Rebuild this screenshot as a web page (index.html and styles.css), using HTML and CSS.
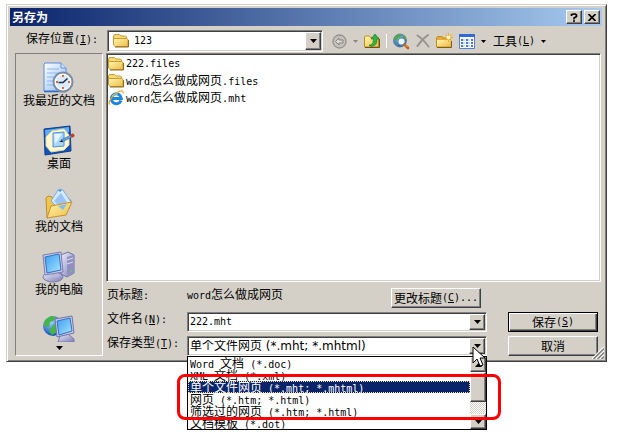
FILE: index.html
```html
<!DOCTYPE html>
<html lang="zh-CN">
<head>
    <meta charset="UTF-8">
    <meta name="viewport" content="width=device-width, initial-scale=1.0">
    <title>另存为</title>
    <link rel="stylesheet" href="styles.css">
</head>
<body>
<!-- shared gradients and symbols -->
<svg class="defs" width="0" height="0" aria-hidden="true">
    <defs>
        <linearGradient id="gold" x1="0" y1="0" x2="1" y2="1">
            <stop offset="0" stop-color="#fff6b0"/>
            <stop offset="1" stop-color="#eebc45"/>
        </linearGradient>
        <linearGradient id="screen" x1="0" y1="0" x2="1" y2="1">
            <stop offset="0" stop-color="#3d9cf0"/>
            <stop offset="1" stop-color="#a5e6ff"/>
        </linearGradient>
        <linearGradient id="paper" x1="0" y1="0" x2="1" y2="1">
            <stop offset="0" stop-color="#ffffff"/>
            <stop offset="1" stop-color="#8fbcf5"/>
        </linearGradient>
        <linearGradient id="metal" x1="0" y1="0" x2="1" y2="1">
            <stop offset="0" stop-color="#eeeefb"/>
            <stop offset="1" stop-color="#7c7cb4"/>
        </linearGradient>
        <radialGradient id="ocean" cx="0.4" cy="0.3" r="0.7">
            <stop offset="0" stop-color="#9fd0ff"/>
            <stop offset="1" stop-color="#1451b8"/>
        </radialGradient>
        <symbol id="folder" viewBox="0 0 16 16">
            <path d="M.5 12V3l1-1.500h5L8 3h4.500l1 1v2" fill="#f7da78" stroke="#c99a32"/>
            <path d="M2.500 13.500L.5 12V5.500h13l1.500 1v7z" fill="url(#gold)" stroke="#c99a32"/>
            <path d="M2 14h13.500V7" fill="none" stroke="#8c6a20"/>
        </symbol>
        <symbol id="caret" viewBox="0 0 7 4">
            <path d="M0 0h7L3.500 4z" fill="currentColor"/>
        </symbol>
        <symbol id="caret-small" viewBox="0 0 5 3">
            <path d="M0 0h5L2.500 3z" fill="currentColor"/>
        </symbol>
    </defs>
</svg>

<div class="dialog">
    <div class="title-bar">
        <h1>另存为</h1>
        <button type="button" class="title-button" aria-label="帮助">
            <svg width="8" height="9" viewBox="0 0 8 9"><path d="M1.500 3V1.500h1L3 1h2l1.500 1v1.500L4 5v1.500M3 8h2" fill="none" stroke="#000" stroke-width="1.600"/></svg>
        </button>
        <button type="button" class="title-button" aria-label="关闭">
            <svg width="8" height="7" viewBox="0 0 8 7"><path d="M.5 0l7 7M7.500 0l-7 7" stroke="#000" stroke-width="1.600"/></svg>
        </button>
    </div>

    <div class="location">
        <label for="folder-select">保存位置<span class="en">(<u>I</u>):</span></label>
        <div class="combo">
            <svg class="combo-icon" width="16" height="16"><use href="#folder"/></svg>
            <select id="folder-select"><option>123</option></select>
            <span class="combo-arrow"><svg width="7" height="4"><use href="#caret"/></svg></span>
        </div>
        <div class="toolbar">
            <button type="button" class="tool disabled" aria-label="后退">
                <svg width="15" height="15" viewBox="0 0 15 15"><circle cx="7.500" cy="7.500" r="6.500" fill="#c5c2bb" stroke="#96938e" stroke-width="1.300"/><path d="M3.500 7.500L7 4v2h4v3H7v2z" fill="#dedbd4" stroke="#85827d"/></svg>
            </button>
            <span class="caret disabled"><svg width="5" height="3"><use href="#caret-small"/></svg></span>
            <button type="button" class="tool" aria-label="向上一级">
                <svg width="16" height="16" viewBox="0 0 16 16"><path d="M.5 14V4l1-1h4l1 1.500h8V14z" fill="url(#gold)" stroke="#c08c22"/><path d="M1 14.500h14.500V6" fill="none" stroke="#6e5011"/><path d="M5 12h2q2.500-1 2.500-6H7L11 1l4 5h-2q.5 7-6 7.500z" fill="#2fb342" stroke="#127023" stroke-width=".6"/></svg>
            </button>
            <span class="separator"></span>
            <button type="button" class="tool" aria-label="搜索 Web">
                <svg width="17" height="17" viewBox="0 0 17 17"><circle cx="7" cy="7.500" r="6.500" fill="url(#ocean)" stroke="#4c7098" stroke-width=".7"/><path d="M2 3.500L5.500 1 9 2 7 4.500 5 5 4 8 1 7zM11 2l2 2v3l-3-2zM2 10l3 1v2z" fill="#51a84b"/><circle cx="8.500" cy="8.500" r="3.600" fill="#e6f6ff" stroke="#6686aa" stroke-width="1.200"/><path d="M11.500 11.500l3.500 3.500" stroke="#b55d13" stroke-width="2.600" stroke-linecap="round"/><path d="M12 11.500l2.500 2.500" stroke="#f5b95b"/></svg>
            </button>
            <button type="button" class="tool disabled" aria-label="删除">
                <svg width="14" height="14" viewBox="0 0 14 14"><path d="M1.500 1.500Q7 5 12.500 12.500M12 1Q6 5 1.500 12" fill="none" stroke="#98958f" stroke-width="2" stroke-linecap="round"/></svg>
            </button>
            <button type="button" class="tool" aria-label="新建文件夹">
                <svg width="17" height="16" viewBox="0 0 17 16"><path d="M.5 14V4.500l1-1H6L7 5h7v9z" fill="#e5a93c" stroke="#c08c22"/><path d="M1 13.500V7h13.500v6.500z" fill="url(#gold)"/><path d="M1 14.500h14.500V8" fill="none" stroke="#7d5c16"/><path d="M12.500 0v9M8 4.500h9M9.500 1.500l6 6M15.500 1.500l-6 6" stroke="#f3a71d"/><circle cx="12.500" cy="4.500" r="2" fill="#fff7a5"/></svg>
            </button>
            <button type="button" class="tool" aria-label="视图">
                <svg width="16" height="15" viewBox="0 0 16 15"><path d="M.5.5h15v14H.5z" fill="#f7fbff" stroke="#5c7fc5"/><path d="M0 0h16v3H0z" fill="#326bd5"/><path d="M2 5h2v2H2zM7 5h2v2H7zM12 5h2v2h-2zM2 8h2v2H2zM7 8h2v2H7zM12 8h2v2h-2zM2 11h2v2H2zM7 11h2v2H7zM12 11h2v2h-2z" fill="#4a79ca"/><path d="M4 6h2M9 6h2M4 9h2M9 9h2M4 12h2M9 12h2" stroke="#a4bce5"/></svg>
            </button>
            <span class="caret"><svg width="5" height="3"><use href="#caret-small"/></svg></span>
            <button type="button" class="tool tools-menu">工具<span class="en">(<u>L</u>)</span></button>
            <span class="caret"><svg width="5" height="3"><use href="#caret-small"/></svg></span>
        </div>
    </div>

    <div class="content">
        <nav class="places">
            <a href="#recent" class="place">
                <svg width="32" height="32" viewBox="0 0 32 32"><path d="M1 29V2l1-1h16l5 5v23z" fill="url(#paper)" stroke="#5a8be0"/><path d="M18 1v5h5" fill="#d6e8ff" stroke="#5a8be0"/><path d="M4 7h12M4 11h11M4 15h8M4 19h6M4 23h6" stroke="#8bb4f0"/><path d="M1 29.500h22" stroke="#326bd0" stroke-width="1.500"/><circle cx="20" cy="20" r="9.500" fill="#eef5ff" stroke="#7d8da6" stroke-width="2"/><circle cx="20" cy="20" r="7.500" fill="#d9ebff" stroke="#fff"/><path d="M20 13v2M20 25v2M13 20h2M25 20h2" stroke="#e46630" stroke-width="2"/><path d="M15.500 20.500H20l4.500-4" fill="none" stroke="#20314d" stroke-width="1.600"/></svg>
                <span>我最近的文档</span>
            </a>
            <a href="#desktop" class="place">
                <svg width="32" height="32" viewBox="0 0 32 32"><path d="M1 4l26-3 1 25-26 4z" fill="#1453b8" stroke="#113d8e"/><path d="M2 5l24-3v5L3 17z" fill="#62aef4"/><path d="M9 6l12-2 5 6v10l-5 5-13 2-5-6V12z" fill="#fff8ce" stroke="#e1dca0"/><path d="M10 8l11-1v14l-11 1z" fill="#a9d7ff" stroke="#4f8ed5"/><path d="M11 9h8l-7 10z" fill="#e5f5ff"/><path d="M18 15l10-5 1 2-10 5z" fill="#67aaea" stroke="#2e62a0" stroke-width=".7"/><path d="M16 17l3-2 1 2z" fill="#222"/><circle cx="29.500" cy="10.500" r="2" fill="#c53c28"/></svg>
                <span>桌面</span>
            </a>
            <a href="#documents" class="place">
                <svg width="32" height="32" viewBox="0 0 32 32"><path d="M3 10l2-2 4 1 1 4 18-1-2 9L4 30z" fill="#f1c650" stroke="#bd8e2d"/><path d="M8 13l7-11 2-1 3 1 8 12-10 9z" fill="#d5eaff" stroke="#79a9df"/><path d="M11 13l7-8 6 9-6 6z" fill="#99c4f3"/><path d="M15 2l2 2 2-2z" fill="#3c8ae0"/><path d="M4 30l4-12 21-4-6 13z" fill="url(#gold)" stroke="#c6932d"/><path d="M15 18l9-2-4 6z" fill="#83bfed"/></svg>
                <span>我的文档</span>
            </a>
            <a href="#computer" class="place">
                <svg width="34" height="32" viewBox="0 0 34 32"><path d="M19 4l7-3 6 3v18l-7 4-6-3z" fill="url(#metal)" stroke="#7171a5"/><path d="M25 6l7-2v18l-7 4z" fill="#9090c2"/><path d="M25 9l6-2M25 13l6-2" stroke="#dcdcf4"/><circle cx="29" cy="20" r="1" fill="#60ce60"/><ellipse cx="11" cy="26" rx="10" ry="5" fill="url(#metal)" stroke="#7b7bae"/><path d="M10 20h6l1 6h-7z" fill="#b9b9dc"/><path d="M1 4l18-3 2 20-18 3z" fill="#c9cae8" stroke="#7d7db1"/><path d="M3 6l14-3 2 16-14 3z" fill="url(#screen)" stroke="#356fc1"/></svg>
                <span>我的电脑</span>
            </a>
            <a href="#network" class="place" aria-label="网上邻居">
                <svg width="34" height="28" viewBox="0 0 34 28"><circle cx="11" cy="12" r="10" fill="url(#ocean)"/><path d="M3 6l6-4 5 1-3 4-3 1-1 5-5-1zM12 10l5 2-2 6-5 3-3-4z" fill="#43b643"/><path d="M18 22l8-2 6 5v3H16z" fill="url(#metal)" stroke="#7b7bae"/><path d="M13 5l17-3 2 17-17 4z" fill="#c9cae8" stroke="#7373ac"/><path d="M15 7l13-3 2 13-13 4z" fill="url(#screen)" stroke="#356fc1"/></svg>
            </a>
            <button type="button" class="places-more" aria-label="更多"><svg width="7" height="4"><use href="#caret"/></svg></button>
        </nav>

        <div class="main">
            <ul class="files">
                <li><svg width="16" height="16"><use href="#folder"/></svg><span class="en">222.files</span></li>
                <li><svg width="16" height="16"><use href="#folder"/></svg><span><span class="en">word</span>怎么做成网页<span class="en">.files</span></span></li>
                <li>
                    <svg width="16" height="16" viewBox="0 0 16 16"><path d="M13 10.500a5 5 0 1 1 .3-2H4.500" fill="none" stroke="#1c86dc" stroke-width="3"/><path d="M4 6q2-3 6-2" fill="none" stroke="#8bdaff"/><path d="M2 14.500C-1 13 5 4 11 1.500q5-2 4 2" fill="none" stroke="#eda81c" stroke-width="1.200"/></svg>
                    <span><span class="en">word</span>怎么做成网页<span class="en">.mht</span></span>
                </li>
            </ul>

            <form class="fields">
                <span class="field-label">页标题<span class="en">:</span></span>
                <div class="page-title">
                    <span><span class="en">word</span>怎么做成网页</span>
                    <button type="button" class="button">更改标题<span class="en">(<u>C</u>)...</span></button>
                </div>

                <label class="field-label" for="file-name">文件名<span class="en">(<u>N</u>):</span></label>
                <div class="combo">
                    <input type="text" id="file-name" value="222.mht">
                    <button type="button" class="combo-arrow" aria-label="历史"><svg width="7" height="4"><use href="#caret"/></svg></button>
                </div>
                <button type="button" class="button default">保存<span class="en">(<u>S</u>)</span></button>

                <label class="field-label" for="file-type">保存类型<span class="en">(<u>T</u>):</span></label>
                <div class="type-field">
                    <div class="combo">
                        <select id="file-type" class="type-select"><option>单个文件网页 (*.mht; *.mhtml)</option></select>
                        <span class="combo-arrow"><svg width="7" height="4"><use href="#caret"/></svg></span>
                    </div>
                    <div class="dropdown">
                        <ul class="options" role="listbox" aria-label="保存类型">
                            <li role="option"><span class="en">Word </span>文档<span class="en"> (*.doc)</span></li>
                            <li role="option"><span class="en">XML </span>文档<span class="en"> (*.xml)</span></li>
                            <li role="option" class="selected" aria-selected="true">单个文件网页<span class="en"> (*.mht; *.mhtml)</span></li>
                            <li role="option">网页<span class="en"> (*.htm; *.html)</span></li>
                            <li role="option">筛选过的网页<span class="en"> (*.htm; *.html)</span></li>
                            <li role="option">文档模板<span class="en"> (*.dot)</span></li>
                        </ul>
                        <div class="scrollbar">
                            <span class="scroll-button"><svg class="up" width="7" height="4"><use href="#caret"/></svg></span>
                            <span class="scroll-thumb"></span>
                            <span class="scroll-track"></span>
                            <span class="scroll-button"><svg width="7" height="4"><use href="#caret"/></svg></span>
                        </div>
                    </div>
                    <div class="highlight"></div>
                    <svg class="cursor" width="13" height="22" viewBox="0 0 13 22"><path d="M1 1v16l4-4 3 7 3-1-3-7h5z" fill="#fff" stroke="#000"/></svg>
                </div>
                <button type="button" class="button">取消</button>
            </form>
        </div>
    </div>
    <svg class="grip" width="12" height="12" viewBox="0 0 12 12"><path d="M0 12L12 0M4 12l8-8M8 12l4-4" stroke="#fff" stroke-width="1.500"/><path d="M1.500 12L12 1.500M5.500 12L12 5.500M9.500 12L12 9.500" stroke="#808080" stroke-width="1.500"/></svg>
</div>
</body>
</html>
```
FILE: styles.css
```css
* {
    box-sizing: border-box;
}

body {
    min-height: 100vh;
    margin: 0;
    padding: 4px 11px 0 6px;
    background-color: #fff;
    color: #000;
    font-family: "Noto Sans CJK SC", sans-serif;
    font-size: 12px;
    line-height: 12px;
}

button,
input,
select {
    margin: 0;
    padding: 0;
    border: none;
    background: none;
    color: inherit;
    font: inherit;
}

svg {
    display: block;
    flex: none;
}

ul {
    margin: 0;
    padding: 0;
    list-style: none;
}

.defs {
    position: absolute;
}

/* half-width characters */
.en {
    font-family: "DejaVu Sans Mono", monospace;
    font-size: 10px;
    white-space: pre;
}

.dialog {
    position: relative;
    padding: 2px 1px 5px 2px;
    background-color: #d4d0c8;
    border: 1px solid;
    border-color: #d4d0c8 #404040 #404040 #d4d0c8;
    box-shadow: inset 1px 1px #fff, inset -1px -1px #808080;
}

.title-bar {
    display: flex;
    align-items: center;
    gap: 2px;
    height: 18px;
    margin: 1px 3px 0 1px;
    padding: 0 2px;
    background: linear-gradient(to right, #0a246a, #a6caf0);
}

.title-bar h1 {
    flex: 1;
    margin: 0;
    color: #fff;
    font-size: 12px;
    line-height: 18px;
}

.title-button,
.combo-arrow,
.scroll-button,
.scroll-thumb,
.button {
    display: flex;
    align-items: center;
    justify-content: center;
    background-color: #d4d0c8;
    border: 1px solid;
    border-color: #fff #404040 #404040 #fff;
    box-shadow: inset -1px -1px #808080;
}

.title-button {
    width: 16px;
    height: 14px;
}

.location {
    display: flex;
    align-items: center;
    height: 27px;
    padding: 3px 0 0 17px;
}

.location label {
    width: 81px;
    padding-bottom: 4px;
}

.location .combo {
    flex: 1;
    height: 22px;
}

.combo {
    display: flex;
    width: 100%;
    height: 20px;
    padding: 1px;
    background-color: #fff;
    border: 1px solid;
    border-color: #808080 #fff #fff #808080;
    box-shadow: inset 1px 1px #404040, inset -1px -1px #d4d0c8;
}

.combo-icon {
    margin: 1px 4px 0;
}

.combo input,
.combo select {
    flex: 1;
    min-width: 0;
    padding-left: 1px;
    appearance: none;
    font-family: "DejaVu Sans Mono", monospace;
    font-size: 10px;
    outline: none;
}

.combo .type-select {
    font-family: "DejaVu Sans", "Noto Sans CJK SC", sans-serif;
    font-size: 12px;
}

.combo-arrow {
    width: 16px;
    color: #000;
}

.toolbar {
    display: flex;
    align-items: center;
    width: 282px;
    padding-left: 9px;
    gap: 6px;
}

.tool {
    display: flex;
    align-items: center;
}

.tools-menu {
    margin-left: 1px;
}

.disabled {
    color: #8a8780;
}

.separator {
    width: 1px;
    height: 14px;
    background-color: #fff;
}

.content {
    display: flex;
    gap: 3px;
    padding: 0 4px 0 6px;
}

.places {
    display: flex;
    flex-direction: column;
    align-items: center;
    width: 88px;
    padding-top: 8px;
    border: 1px solid;
    border-color: #808080 #fff #fff #808080;
}

.place {
    display: flex;
    flex-direction: column;
    align-items: center;
    margin-bottom: 19px;
    color: #000;
    text-decoration: none;
    white-space: nowrap;
}

.place:last-of-type {
    margin-bottom: 4px;
}

.main {
    flex: 1;
    min-width: 0;
}

.files {
    height: 229px;
    padding: 1px;
    background-color: #fff;
    border: 1px solid;
    border-color: #808080 #fff #fff #808080;
    box-shadow: inset 1px 1px #404040, inset -1px -1px #d4d0c8;
}

.files li {
    display: flex;
    align-items: center;
    gap: 2px;
    height: 17px;
}

.fields {
    display: grid;
    grid-template-columns: 80px 1fr 90px;
    grid-auto-rows: 20px;
    row-gap: 4px;
    padding: 6px 3px 0 1px;
}

.page-title {
    display: flex;
    grid-column: 2 / 4;
    justify-content: space-between;
    margin-right: 117px;
}

.page-title .button {
    width: 90px;
}

.fields > .combo,
.type-field {
    width: auto;
    margin-right: 21px;
}

.button.default {
    border-color: #000;
    box-shadow: inset 1px 1px #fff, inset -1px -1px #404040, inset -2px -2px #808080;
}

.type-field {
    position: relative;
}

.dropdown {
    position: absolute;
    z-index: 1;
    top: 20px;
    left: 0;
    right: 0;
    display: flex;
    background-color: #fff;
    border: 1px solid #000;
}

.options {
    flex: 1;
}

.options li {
    height: 12px;
    padding-left: 2px;
}

.options .selected {
    background-color: #0a246a;
    color: #fff;
    outline: 1px dotted #f5db95;
    outline-offset: -1px;
}

.scrollbar {
    display: flex;
    flex-direction: column;
    width: 16px;
}

.scroll-button {
    height: 15px;
}

.scroll-thumb {
    height: 30px;
}

.scroll-track {
    flex: 1;
    background: repeating-conic-gradient(#fff 0% 25%, #d4d0c8 0% 50%) 0 0 / 2px 2px;
}

.up {
    transform: rotate(180deg);
}

.highlight {
    position: absolute;
    z-index: 2;
    top: 38px;
    left: -10px;
    right: -14px;
    height: 46px;
    border: 3px solid #f00;
    border-radius: 8px;
}

.cursor {
    position: absolute;
    z-index: 3;
    top: 10px;
    right: 2px;
}

.grip {
    position: absolute;
    right: 2px;
    bottom: 2px;
}
```
